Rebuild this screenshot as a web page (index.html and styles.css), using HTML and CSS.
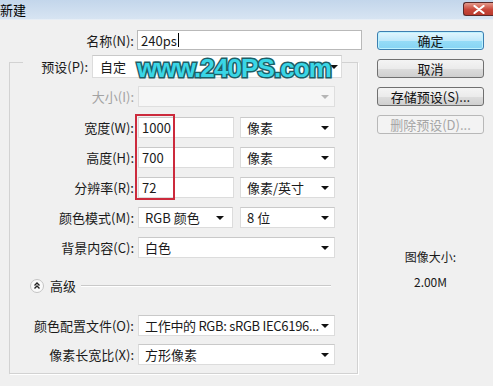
FILE: index.html
```html
<!DOCTYPE html>
<html lang="zh-CN">
<head>
    <meta charset="UTF-8">
    <title>新建</title>
    <link rel="stylesheet" href="styles.css">
</head>
<body>
    <div class="titlebar">
        <span class="title">新建</span>
        <span class="close">
            <svg width="12" height="9" viewBox="0 0 12 9"><path d="M1.5 1 L10.5 8 M10.5 1 L1.5 8" stroke="#fff" stroke-width="2.2" stroke-linecap="round"/></svg>
        </span>
    </div>

    <div class="dialog">
        <div class="left">
            <div class="row name-row">
                <label class="lbl">名称(N):</label>
                <div class="field text wide">240ps<span class="caret"></span></div>
            </div>

            <div class="group">
                <div class="row preset-row">
                    <label class="lbl">预设(P):</label>
                    <div class="field select preset">自定<span class="arrow"></span></div>
                </div>
                <div class="row size-row">
                    <label class="lbl disabled">大小(I):</label>
                    <div class="field select full off"><span class="arrow"></span></div>
                </div>
                <div class="row">
                    <label class="lbl">宽度(W):</label>
                    <div class="field text half">1000</div>
                    <div class="field select unit">像素<span class="arrow"></span></div>
                </div>
                <div class="row">
                    <label class="lbl">高度(H):</label>
                    <div class="field text half">700</div>
                    <div class="field select unit">像素<span class="arrow"></span></div>
                </div>
                <div class="row">
                    <label class="lbl">分辨率(R):</label>
                    <div class="field text half">72</div>
                    <div class="field select unit">像素/英寸<span class="arrow"></span></div>
                </div>
                <div class="row">
                    <label class="lbl">颜色模式(M):</label>
                    <div class="field select mode">RGB 颜色<span class="arrow"></span></div>
                    <div class="field select unit">8 位<span class="arrow"></span></div>
                </div>
                <div class="row">
                    <label class="lbl">背景内容(C):</label>
                    <div class="field select full">白色<span class="arrow"></span></div>
                </div>

                <div class="advanced">
                    <svg width="14" height="14" viewBox="0 0 14 14">
                        <circle cx="7" cy="7" r="6.5" fill="#fafafa" stroke="#c4c4c4"/>
                        <path d="M4.5 6.5 L7 4 L9.5 6.5 M4.5 9.5 L7 7 L9.5 9.5" fill="none" stroke="#222" stroke-width="1.4"/>
                    </svg>
                    <span class="adv-text">高级</span>
                    <span class="adv-line"></span>
                </div>

                <div class="row profile-row">
                    <label class="lbl">颜色配置文件(O):</label>
                    <div class="field select full tight">工作中的 RGB: sRGB IEC6196...<span class="arrow"></span></div>
                </div>
                <div class="row aspect-row">
                    <label class="lbl">像素长宽比(X):</label>
                    <div class="field select full">方形像素<span class="arrow"></span></div>
                </div>
            </div>
        </div>

        <div class="right">
            <div class="btn default">确定</div>
            <div class="btn">取消</div>
            <div class="btn">存储预设(S)...</div>
            <div class="btn off">删除预设(D)...</div>

            <div class="info">
                <div>图像大小:</div>
                <div class="info-value">2.00M</div>
            </div>
        </div>
    </div>

    <div class="watermark">www.240PS.com</div>
    <div class="highlight"></div>
</body>
</html>
```

FILE: styles.css
```css
body {
    margin: 0;
    width: 493px;
    height: 386px;
    overflow: hidden;
    position: relative;
    background: #f0f0f0;
    color: #1a1a1a;
    font-family: "Noto Sans CJK SC", "Noto Sans", sans-serif;
    font-size: 13px;
}
.titlebar {
    height: 19px;
    display: flex;
    justify-content: space-between;
    align-items: flex-start;
    background: linear-gradient(#c3d6eb, #d7e4f2);
    border-bottom: 1px solid #e6edf5;
}
.title {
    font-size: 13px;
    line-height: 19px;
    color: #000;
}
.close {
    margin-top: 2px;
    width: 30px;
    height: 14px;
    box-sizing: border-box;
    border: 1px solid #5a2a2a;
    border-right: none;
    border-radius: 3px 0 0 3px;
    background: linear-gradient(#e49a8c, #c9473a 55%, #b83a2e);
    display: flex;
    align-items: center;
    justify-content: center;
}
.dialog {
    display: flex;
}
.left {
    width: 362px;
}
.row {
    display: flex;
    align-items: center;
    height: 21px;
}
.lbl {
    width: 124px;
    flex: none;
    text-align: right;
    margin-right: 4px;
    white-space: nowrap;
}
.lbl.disabled {
    color: #a3a3a3;
}
.name-row {
    margin-top: 10px;
    height: 20px;
}
.name-row .lbl {
    width: 134px;
    margin-right: 3px;
}
.field {
    height: 100%;
    box-sizing: border-box;
    display: flex;
    align-items: center;
    position: relative;
    background: #fff;
    border: 1px solid #dcdcdc;
    border-top-color: #c9c9c9;
    white-space: nowrap;
}
.text {
    padding-left: 3px;
}
.wide {
    width: 225px;
    border-color: #b9b9b9;
}
.caret {
    width: 1px;
    height: 14px;
    background: #000;
    margin-left: 1px;
}
.select {
    padding-left: 6px;
}
.tight {
    letter-spacing: -0.3px;
}
.arrow {
    position: absolute;
    right: 5px;
    top: 8px;
    border-left: 4px solid transparent;
    border-right: 4px solid transparent;
    border-top: 4px solid #111;
}
.off .arrow {
    border-top-color: #b5b5b5;
}
.select.off {
    background: #f6f6f6;
    border-color: #dedede;
}
.full {
    width: 197px;
}
.half {
    width: 96px;
    margin-right: 6px;
}
.unit {
    width: 95px;
}
.mode {
    width: 95px;
    margin-right: 7px;
}
.mode .arrow {
    right: 8px;
}
.group {
    margin: 12px 0 0 9px;
    width: 349px;
    height: 312px;
    box-sizing: border-box;
    border: 1px solid #d2d2d2;
    box-shadow: 1px 1px 0 #fff;
}
.group .row {
    margin-top: 9px;
}
.group .preset-row {
    margin: -8px 0 0 13px;
    width: 319px;
    height: 23px;
    background: #f0f0f0;
}
.preset-row .lbl {
    width: 65px;
}
.preset {
    width: 250px;
    padding-left: 7px;
}
.preset .arrow {
    top: 9px;
    right: 3px;
}
.group .size-row {
    margin-top: 8px;
}
.group .size-row + .row {
    margin-top: 10px;
}
.advanced {
    display: flex;
    align-items: center;
    height: 14px;
    margin: 21px 26px 0 20px;
}
.adv-text {
    margin-left: 6px;
    line-height: 14px;
}
.adv-line {
    flex: 1;
    margin-left: 5px;
    height: 1px;
    background: #c9c9c9;
    border-bottom: 1px solid #fff;
}
.group .profile-row {
    margin-top: 22px;
}
.group .aspect-row {
    margin-top: 8px;
}
.right {
    margin-left: 15px;
    width: 107px;
    display: flex;
    flex-direction: column;
}
.btn {
    height: 19px;
    margin-top: 9px;
    box-sizing: border-box;
    border: 1px solid #707070;
    border-radius: 3px;
    background: linear-gradient(#f4f4f4, #ebebeb 50%, #dddddd 51%, #cfcfcf);
    text-align: center;
    line-height: 17px;
    color: #111;
}
.btn.default {
    margin-top: 11px;
    border-color: #3c7fb1;
    background: linear-gradient(#e3f6fd, #bfe9fb 50%, #96dcf7 51%, #86d4f4);
    box-shadow: inset 0 0 0 1px #bdf2ff;
}
.btn.off {
    border-color: #b8b8b8;
    background: #f3f3f3;
    color: #a6a6a6;
}
.info {
    margin-top: 115px;
    text-align: center;
    font-size: 12px;
    line-height: 16px;
}
.info-value {
    margin-top: 9px;
}
.watermark {
    position: absolute;
    left: 137px;
    top: 53px;
    font-family: "Liberation Sans", sans-serif;
    font-weight: bold;
    font-size: 26px;
    line-height: 30px;
    letter-spacing: -0.9px;
    color: #3ad6e6;
    -webkit-text-stroke: 3px #1d5e66;
    paint-order: stroke fill;
}
.highlight {
    position: absolute;
    left: 135px;
    top: 114px;
    width: 40px;
    height: 86px;
    box-sizing: border-box;
    border: 2px solid #cc2a3c;
}
```
